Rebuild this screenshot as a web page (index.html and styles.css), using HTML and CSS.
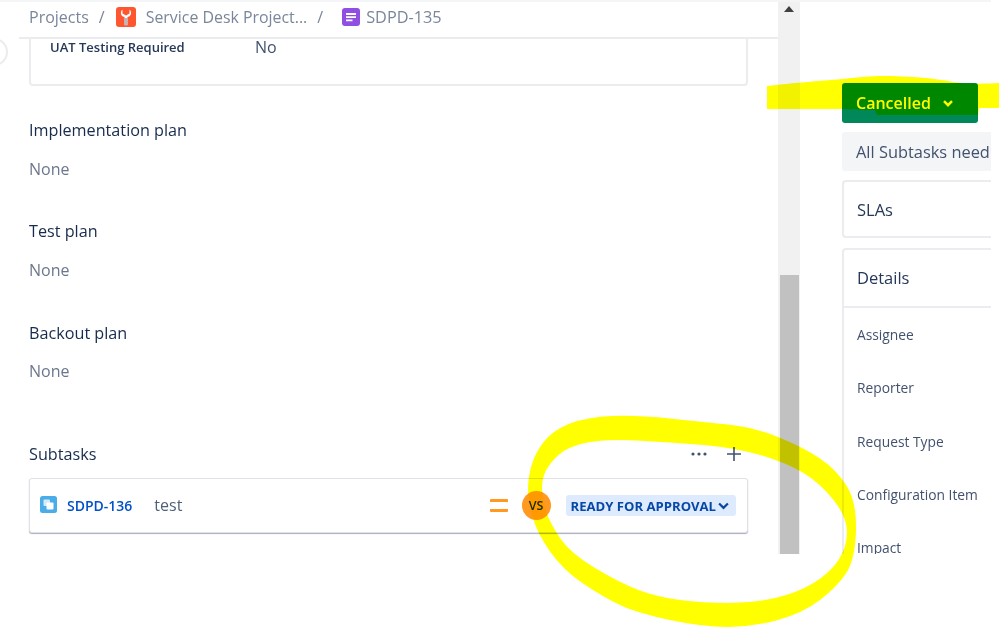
FILE: index.html
```html
<!DOCTYPE html>
<html lang="en">
<head>
<meta charset="utf-8">
<title>SDPD-135</title>
<link rel="stylesheet" href="styles.css">
</head>
<body>
<div class="app">
  <main class="main">
    <span class="collapse"></span>
    <nav class="crumbs">
      <span>Projects</span>
      <span class="sep">/</span>
      <svg class="icon-project" viewBox="0 0 20 20"><rect width="20" height="20" rx="3" fill="#ff5630"/><path d="M6.500 2.500C4.500 4 4.300 7.500 6.500 9.300c.7.500 1.400.8 2.100.9V18h2.800V10.200c.7-.1 1.400-.4 2.100-.9 2.200-1.800 2-5.300 0-6.800v4L10 8.500 6.500 6.500z" fill="#fff"/><rect x="8.600" y="11" width="2.800" height="7.500" fill="#b3bac5"/></svg>
      <span class="crumb-project">Service Desk Project...</span>
      <span class="sep sep-second">/</span>
      <svg class="icon-page" viewBox="0 0 18 18"><rect width="18" height="18" rx="3" fill="#8f4fe3"/><path d="M4 5h10v2H4zM4 8.300h10v1.800H4zM4 11.400h6.500v1.800H4z" fill="#fff"/></svg>
      <span class="crumb-key">SDPD-135</span>
    </nav>
    <div class="content">
      <section class="fields">
        <span class="field-label">UAT Testing Required</span>
        <span class="field-value">No</span>
      </section>
      <section class="block block-first">
        <h2>Implementation plan</h2>
        <p>None</p>
      </section>
      <section class="block">
        <h2>Test plan</h2>
        <p>None</p>
      </section>
      <section class="block block-last">
        <h2>Backout plan</h2>
        <p>None</p>
      </section>
      <div class="subtasks-head">
        <h2>Subtasks</h2>
        <svg class="dots" viewBox="0 0 16 4"><circle cx="2" cy="2" r="1.600"/><circle cx="8" cy="2" r="1.600"/><circle cx="14" cy="2" r="1.600"/></svg>
        <svg class="plus" viewBox="0 0 14 14"><path d="M7 0v14M0 7h14"/></svg>
      </div>
      <div class="subtask">
        <svg class="icon-subtask" viewBox="0 0 17 17"><rect width="17" height="17" rx="2.500" fill="#4bade8"/><rect x="3.500" y="3.500" width="6.500" height="6.500" rx="1" fill="#fff" fill-opacity=".75"/><rect x="6.500" y="6.500" width="7" height="7" rx="1" fill="#fff"/></svg>
        <a class="subtask-key">SDPD-136</a>
        <span class="subtask-name">test</span>
        <span class="priority"></span>
        <span class="avatar">VS</span>
        <span class="lozenge">READY FOR APPROVAL
          <svg viewBox="0 0 10 7"><path d="M1 1.200 5 5.200 9 1.200"/></svg>
        </span>
      </div>
    </div>
  </main>
  <div class="scrollbar">
    <span class="arrow"></span>
    <span class="thumb"></span>
  </div>
  <aside class="side">
    <button class="status">Cancelled
      <svg viewBox="0 0 10 7"><path d="M1 1.200 5 5.200 9 1.200"/></svg>
    </button>
    <div class="banner">All Subtasks need to be closed</div>
    <section class="card card-sla"><h3>SLAs</h3></section>
    <section class="card card-details">
      <h3 class="details-title">Details</h3>
      <div class="details-rows">
        <span>Assignee</span>
        <span>Reporter</span>
        <span>Request Type</span>
        <span>Configuration Item</span>
        <span>Impact</span>
      </div>
    </section>
  </aside>
</div>
<svg class="ink" viewBox="0 0 999 627">
  <path d="M767 86C790 83 820 81 843 79C860 77 870 76 883 76C905 76 935 78 953 82C965 84 985 84 999 83V108H979L978 115H877L875 110L842 109H767Z"/>
  <path fill-rule="evenodd" d="M528 489Q528 478 531.500 465.500Q535 453 544 441.500Q553 430 570 423.500Q587 417 612 416Q637 415 670 418.500Q703 422 728 424.500Q753 427 778 437Q803 447 820 458.500Q837 470 847 486.500Q857 503 856 531.500Q855 560 846 573.500Q837 587 820 600Q803 613 778 620Q753 627 728 627Q703 627 670 620Q637 613 620 605Q603 597 583 583.500Q563 570 550 551.500Q537 533 532.500 516.500Q528 500 528 489ZM542 489Q542 500 546 511.500Q550 523 560 538Q570 553 595 568Q620 583 638.500 590Q657 597 680 600Q703 603 728 603Q753 603 775 598Q797 593 813.500 583Q830 573 838.500 560Q847 547 847 532Q847 517 833.500 500Q820 483 803.500 473Q787 463 762 455.500Q737 448 703.500 445Q670 442 636.500 440.500Q603 439 585 443Q567 447 558.500 455Q550 463 546 470.500Q542 478 542 489Z"/>
</svg>
</body>
</html>
```

FILE: styles.css
```css
* { box-sizing: border-box; }

html, body { margin: 0; padding: 0; background: #fff; }

body {
  width: 999px;
  height: 627px;
  overflow: hidden;
  position: relative;
  font-family: "Open Sans", "Noto Sans", sans-serif;
  color: #172b4d;
}

.app {
  display: flex;
  width: 991px;
  height: 554px;
  overflow: hidden;
  border-top: 2px solid #f4f5f7;
}

/* main column */
.main {
  position: relative;
  flex: 0 0 778px;
  display: flex;
  flex-direction: column;
}

.collapse {
  position: absolute;
  left: -20px;
  top: 36px;
  width: 28px;
  height: 28px;
  border: 2px solid #ebecf0;
  border-radius: 50%;
  background: #fff;
}

.crumbs {
  display: flex;
  align-items: center;
  height: 37px;
  margin-left: 19px;
  padding: 0 0 5px 10px;
  border-bottom: 2px solid #ebecf0;
  font-size: 16px;
  color: #7a869a;
}

.sep { margin-left: 10px; }
.sep-second { margin-left: 10px; }
.icon-project { width: 20px; height: 20px; margin-left: 11px; }
.crumb-project { margin-left: 10px; font-size: 15.900px; }
.icon-page { width: 18px; height: 18px; margin-left: 19px; }
.crumb-key { margin-left: 6px; font-size: 16.300px; }

.content {
  padding-left: 29px;
  width: 748px;
  box-sizing: content-box;
}

.fields {
  display: flex;
  align-items: center;
  width: 719px;
  height: 47px;
  padding: 0 0 30px 19px;
  border: 2px solid #ebecf0;
  border-top: 0;
  border-radius: 0 0 4px 4px;
}

.field-label {
  flex: 0 0 205px;
  font-size: 13px;
  font-weight: 600;
  color: #253858;
}

.field-value { font-size: 16px; color: #42526e; }

.block { margin-top: 39px; }
.block-first { margin-top: 33px; }
.block-last { margin-top: 40px; }

h2 {
  margin: 0;
  font-size: 16.200px;
  line-height: 22px;
  font-weight: 500;
  color: #172b4d;
}

.block p {
  margin: 16px 0 0;
  font-size: 16px;
  line-height: 24px;
  color: #6b778c;
}

.block-last p { margin-top: 15px; }

.subtasks-head {
  display: flex;
  align-items: center;
  width: 719px;
  height: 22px;
  margin-top: 60px;
}

.subtasks-head h2 { flex: 1; }

.dots { width: 16px; height: 4px; margin-right: 20px; fill: #42526e; }
.plus { width: 14px; height: 14px; margin-right: 7px; stroke: #42526e; stroke-width: 1.600; fill: none; }

.subtask {
  display: flex;
  align-items: center;
  width: 719px;
  height: 55px;
  margin-top: 13px;
  padding: 0 11px 0 10px;
  background: #fff;
  border: 1px solid #dfe1e6;
  border-radius: 3px;
  box-shadow: 0 1px 1px rgba(9, 30, 66, 0.35);
}

.icon-subtask { width: 17px; height: 17px; margin-top: -3px; }

.subtask-key { margin-left: 10px; font-size: 14px; font-weight: 600; color: #0052cc; }

.subtask-name { flex: 1; margin: -2px 0 0 22px; font-size: 16px; color: #505f79; }

.priority {
  width: 18px;
  height: 13px;
  border-top: 3px solid #ff991f;
  border-bottom: 3px solid #ff991f;
  border-radius: 1px;
}

.avatar {
  display: flex;
  align-items: center;
  justify-content: center;
  width: 29px;
  height: 29px;
  margin-left: 14px;
  border-radius: 50%;
  background: #ff991f;
  font-size: 12.500px;
  font-weight: 600;
  color: #172b4d;
}

.lozenge {
  display: flex;
  align-items: center;
  height: 21px;
  margin-left: 15px;
  padding: 0 7px 0 5px;
  background: #deebff;
  border-radius: 3px;
  font-size: 13.100px;
  font-weight: 700;
  white-space: nowrap;
  color: #0747a6;
}

.lozenge svg { width: 11px; height: 8px; margin-left: 2px; fill: none; stroke: #0747a6; stroke-width: 2; }

/* scrollbar */
.scrollbar {
  flex: 0 0 22px;
  display: flex;
  flex-direction: column;
  align-items: center;
  background: #f1f1f1;
}

.arrow {
  margin-top: 4px;
  border-left: 5px solid transparent;
  border-right: 5px solid transparent;
  border-bottom: 6px solid #404040;
}

.thumb { width: 19px; height: 279px; margin-top: auto; background: #c1c1c1; }

/* side panel */
.side {
  flex: 1;
  min-width: 0;
  padding: 81px 0 0 42px;
  overflow: hidden;
  display: flex;
  flex-direction: column;
  align-items: flex-start;
}

.status {
  flex: none;
  display: flex;
  align-items: center;
  width: 136px;
  height: 40px;
  padding: 0 0 0 14px;
  border: 0;
  border-radius: 3px;
  background: #00875a;
  font-family: inherit;
  font-size: 16px;
  font-weight: 600;
  color: #fff;
}

.status svg { width: 10px; height: 7px; margin-left: 12px; fill: none; stroke: #fff; stroke-width: 2.400; }

.banner {
  flex: none;
  width: 250px;
  height: 39px;
  margin-top: 9px;
  padding-left: 14px;
  line-height: 39px;
  background: #f4f5f7;
  border-radius: 3px 0 0 3px;
  font-size: 16.400px;
  font-weight: 500;
  white-space: nowrap;
  color: #42526e;
}

.card {
  flex: none;
  width: 250px;
  border: 2px solid #ebecf0;
  border-radius: 4px;
}

.card h3 { margin: 0; font-size: 16.500px; font-weight: 500; color: #253858; }

.card-sla { height: 58px; margin-top: 9px; padding: 16px 13px; }

.card-details { margin-top: 10px; }

.details-title { height: 58px; padding: 16px 13px 0; border-bottom: 2px solid #ebecf0; }

.details-rows {
  display: flex;
  flex-direction: column;
  padding: 0 13px;
}

.details-rows span {
  height: 53.250px;
  line-height: 53.250px;
  font-size: 13.800px;
  font-weight: 500;
  white-space: nowrap;
  color: #42526e;
}

/* highlighter annotation on top of the screenshot */
.ink {
  position: absolute;
  left: 0;
  top: 0;
  width: 999px;
  height: 627px;
  fill: #ffff00;
  mix-blend-mode: multiply;
  pointer-events: none;
}
```
